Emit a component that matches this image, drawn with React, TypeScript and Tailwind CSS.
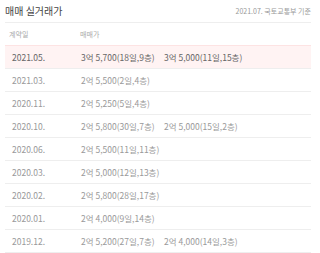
import React from 'react';

interface Deal {
  month: string;
  prices: string[];
}

const deals: Deal[] = [
  { month: '2021.05.', prices: ['3억 5,700(18일,9층)', '3억 5,000(11일,15층)'] },
  { month: '2021.03.', prices: ['2억 5,500(2일,4층)'] },
  { month: '2020.11.', prices: ['2억 5,250(5일,4층)'] },
  { month: '2020.10.', prices: ['2억 5,800(30일,7층)', '2억 5,000(15일,2층)'] },
  { month: '2020.06.', prices: ['2억 5,500(11일,11층)'] },
  { month: '2020.03.', prices: ['2억 5,000(12일,13층)'] },
  { month: '2020.02.', prices: ['2억 5,800(28일,17층)'] },
  { month: '2020.01.', prices: ['2억 4,000(9일,14층)'] },
  { month: '2019.12.', prices: ['2억 5,200(27일,7층)', '2억 4,000(14일,3층)'] },
];

const App: React.FC = () => {
  return (
    <div
      className="w-[320px] h-[253px] bg-white px-[5px] pr-[9px] overflow-hidden"
      style={{ fontFamily: '"Noto Sans CJK KR", "Noto Sans", sans-serif' }}
    >
      <div className="flex items-center justify-between h-[22px]">
        <h3 className="text-[10px] text-[#444] leading-none">매매 실거래가</h3>
        <span className="text-[7px] text-[#999] leading-none">2021.07. 국토교통부 기준</span>
      </div>
      <div className="border-t border-[#eee]">
        <div className="flex items-center h-[22px] text-[7px] text-[#aaa] px-[4px]">
          <span className="w-[71px]">계약일</span>
          <span>매매가</span>
        </div>
        {deals.map((deal, i) => (
          <div
            key={deal.month}
            className={`flex items-center h-[23px] border-t border-[#eee] text-[8.5px] px-[7px] ${
              i === 0 ? 'bg-[#fff3f3] border-[#fde3e3] text-[#666]' : 'text-[#999]'
            }`}
          >
            <span className="w-[69px]">{deal.month}</span>
            <span className="w-[83px]">{deal.prices[0]}</span>
            {deal.prices[1] && <span>{deal.prices[1]}</span>}
          </div>
        ))}
        <div className="border-t border-[#eee]" />
      </div>
    </div>
  );
};

export default App;
